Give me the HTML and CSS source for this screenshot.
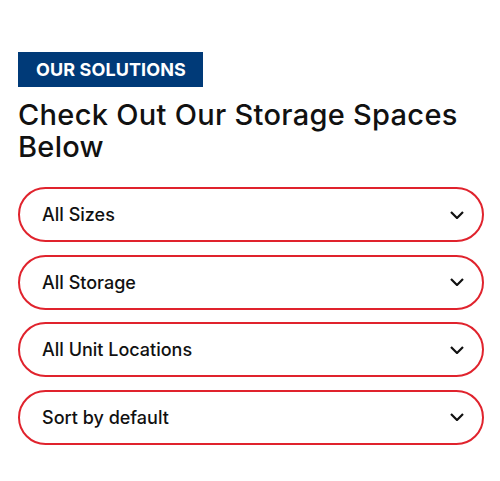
FILE: index.html
```html
<!DOCTYPE html>
<html lang="en">
<head>
  <meta charset="UTF-8" />
  <meta name="viewport" content="width=device-width, initial-scale=1" />
  <title>Storage Spaces</title>
  <link rel="stylesheet" href="styles.css">
</head>
<body>
  <section class="solutions">
    <span class="tag">OUR SOLUTIONS</span>
    <h2>Check Out Our Storage Spaces Below</h2>

    <div class="filters">
      <div class="select">
        <span>All Sizes</span>
        <svg viewBox="0 0 14 8" class="chev"><path d="M1 1l6 6 6-6" /></svg>
      </div>
      <div class="select">
        <span>All Storage</span>
        <svg viewBox="0 0 14 8" class="chev"><path d="M1 1l6 6 6-6" /></svg>
      </div>
      <div class="select">
        <span>All Unit Locations</span>
        <svg viewBox="0 0 14 8" class="chev"><path d="M1 1l6 6 6-6" /></svg>
      </div>
      <div class="select">
        <span>Sort by default</span>
        <svg viewBox="0 0 14 8" class="chev"><path d="M1 1l6 6 6-6" /></svg>
      </div>
    </div>
  </section>
</body>
</html>
```

FILE: styles.css
```css
/* reset + base */
body {
  margin: 0;
  background: #fff;
  color: #111;
  font-family: Inter, "Noto Sans", sans-serif;
}
.solutions {
  padding: 52px 16px 0 18px;
}
.tag {
  display: inline-block;
  background: #003a78;
  color: #fff;
  font-weight: 700;
  font-size: 18px;
  letter-spacing: 0.1px;
  line-height: 35px;
  padding: 0 17px 0 18px;
}
h2 {
  margin: 12px 0 0;
  font-size: 29px;
  font-weight: 500;
  line-height: 32px;
  letter-spacing: 0.3px;
}
.filters {
  margin-top: 24px;
  display: flex;
  flex-direction: column;
  gap: 12.5px;
}
.select {
  height: 51px;
  border: 2px solid #e0232d;
  border-radius: 28px;
  display: flex;
  align-items: center;
  justify-content: space-between;
  padding: 0 18px 0 22px;
  font-size: 18px;
  font-weight: 500;
  letter-spacing: 0;
}
.chev {
  width: 14px;
  height: 8px;
  fill: none;
  stroke: #111;
  stroke-width: 2.2;
}
```
